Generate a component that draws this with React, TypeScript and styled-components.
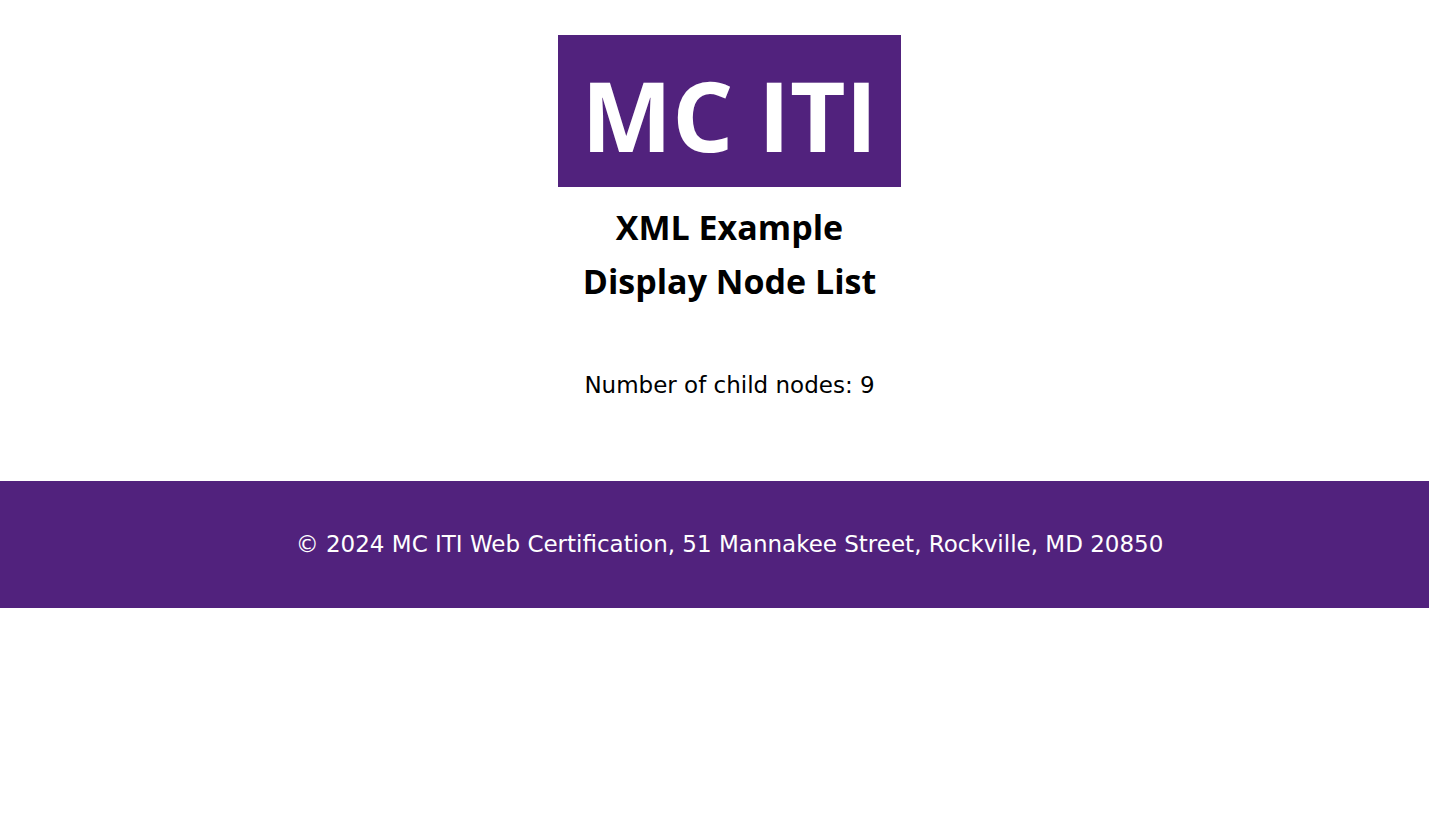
import React from "react";
import styled, { createGlobalStyle } from "styled-components";

const GlobalStyle = createGlobalStyle`
  * { box-sizing: border-box; }
  body {
    margin: 0;
    background: #fff;
    color: #000;
    font-family: Verdana, "DejaVu Sans", sans-serif;
    font-size: 23px;
    line-height: 36px;
    text-align: center;
  }
`;

const Header = styled.header`
  display: flex;
  flex-direction: column;
  align-items: center;
  padding: 35px 0 0 30px;
`;

const Brand = styled.h1`
  margin: 0;
  padding: 12px 24px 4px;
  background: #51227d;
  color: #fff;
  font: bold 96px/136px "Segoe UI", "Open Sans", sans-serif;
`;

const Title = styled.h2`
  margin: 13px 0 0;
  font: bold 34px/54px "Segoe UI", "Open Sans", sans-serif;
`;

const Main = styled.main`
  padding: 59px 0 78px 30px;
`;

const Text = styled.p`
  margin: 0;
`;

const Footer = styled.footer`
  padding: 45px 0 46px 30px;
  background: #51227d;
  color: #fff;
`;

export default function App() {
  return (
    <>
      <GlobalStyle />
      <Header>
        <Brand>MC ITI</Brand>
        <Title>
          XML Example
          <br />
          Display Node List
        </Title>
      </Header>
      <Main>
        <Text>Number of child nodes: 9</Text>
      </Main>
      <Footer>
        <Text>© 2024 MC ITI Web Certification, 51 Mannakee Street, Rockville, MD 20850</Text>
      </Footer>
    </>
  );
}
